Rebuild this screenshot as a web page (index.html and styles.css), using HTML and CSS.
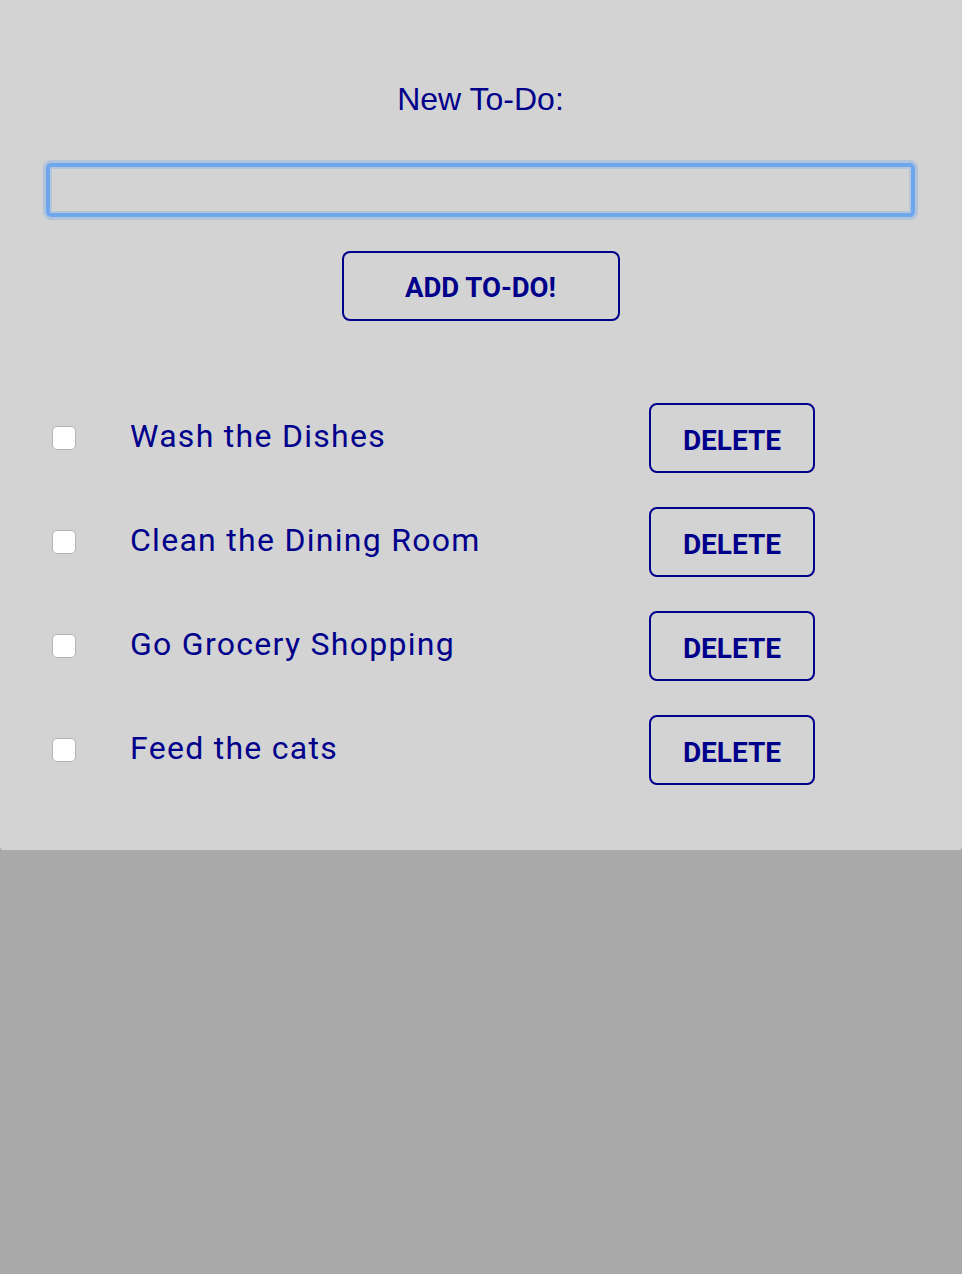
FILE: index.html
```html
<!DOCTYPE html>
<html>
<head>
<meta charset="utf-8">
<link rel="stylesheet" href="styles.css">
</head>
<body>
<main class="app">
  <h1 class="title">New To-Do:</h1>
  <input class="new-input" type="text">
  <button class="add-btn">ADD TO-DO!</button>
  <ul class="list">
    <li class="item"><input type="checkbox" class="check"><span class="label">Wash the Dishes</span><button class="del">DELETE</button></li>
    <li class="item"><input type="checkbox" class="check"><span class="label">Clean the Dining Room</span><button class="del">DELETE</button></li>
    <li class="item"><input type="checkbox" class="check"><span class="label">Go Grocery Shopping</span><button class="del">DELETE</button></li>
    <li class="item"><input type="checkbox" class="check"><span class="label">Feed the cats</span><button class="del">DELETE</button></li>
  </ul>
</main>
</body>
</html>
```
FILE: styles.css
```css
html, body {
  margin: 0;
  padding: 0;
  background: #a9a9a9;
}
body {
  font-family: "Liberation Sans", Arial, sans-serif;
  color: #00008b;
}
.app {
  background: #d3d3d3;
  border-radius: 0 0 4px 4px;
  padding: 82px 47px 65px 46px;
  height: 850px;
  box-sizing: border-box;
  display: flex;
  flex-direction: column;
  align-items: center;
}
.title {
  margin: 0;
  font-weight: normal;
  font-size: 32px;
  line-height: 34px;
  height: 34px;
  color: #00008b;
}
.new-input {
  margin-top: 47px;
  width: 100%;
  height: 54px;
  box-sizing: border-box;
  border: 4px solid #6ea7ec;
  border-radius: 5px;
  background: #d3d3d3;
  box-shadow: 0 0 1px 3px rgba(111, 167, 234, 0.35), inset 0 0 0 2px rgba(111, 167, 234, 0.3);
  outline: none;
  font-size: 20px;
}
.add-btn {
  margin-top: 34px;
  width: 278px;
  height: 70px;
  box-sizing: border-box;
  border: 2px solid #00008b;
  border-radius: 8px;
  background: transparent;
  color: #00008b;
  font-family: Roboto, sans-serif;
  font-weight: bold;
  font-size: 27.5px;
  padding: 3px 0 0 0;
}
.list {
  list-style: none;
  margin: 82px 0 0 0;
  padding: 0 0 0 1px;
  width: 100%;
  box-sizing: border-box;
  display: flex;
  flex-direction: column;
  gap: 34px;
}
.item {
  display: grid;
  grid-template-columns: 83px 519px 166px;
  align-items: center;
  height: 70px;
}
.check {
  appearance: none;
  -webkit-appearance: none;
  margin: 0 0 0 5px;
  width: 24px;
  height: 24px;
  box-sizing: border-box;
  background: #fff;
  border: 1px solid #b3b3b3;
  border-radius: 5px;
}
.label {
  font-family: Roboto, sans-serif;
  font-size: 32px;
  letter-spacing: 1.28px;
  color: #00008b;
  margin-top: -4px;
}
.del {
  width: 166px;
  height: 70px;
  box-sizing: border-box;
  border: 2px solid #00008b;
  border-radius: 8px;
  background: transparent;
  color: #00008b;
  font-family: Roboto, sans-serif;
  font-weight: bold;
  font-size: 28px;
  padding: 4px 0 0 0;
}
```
